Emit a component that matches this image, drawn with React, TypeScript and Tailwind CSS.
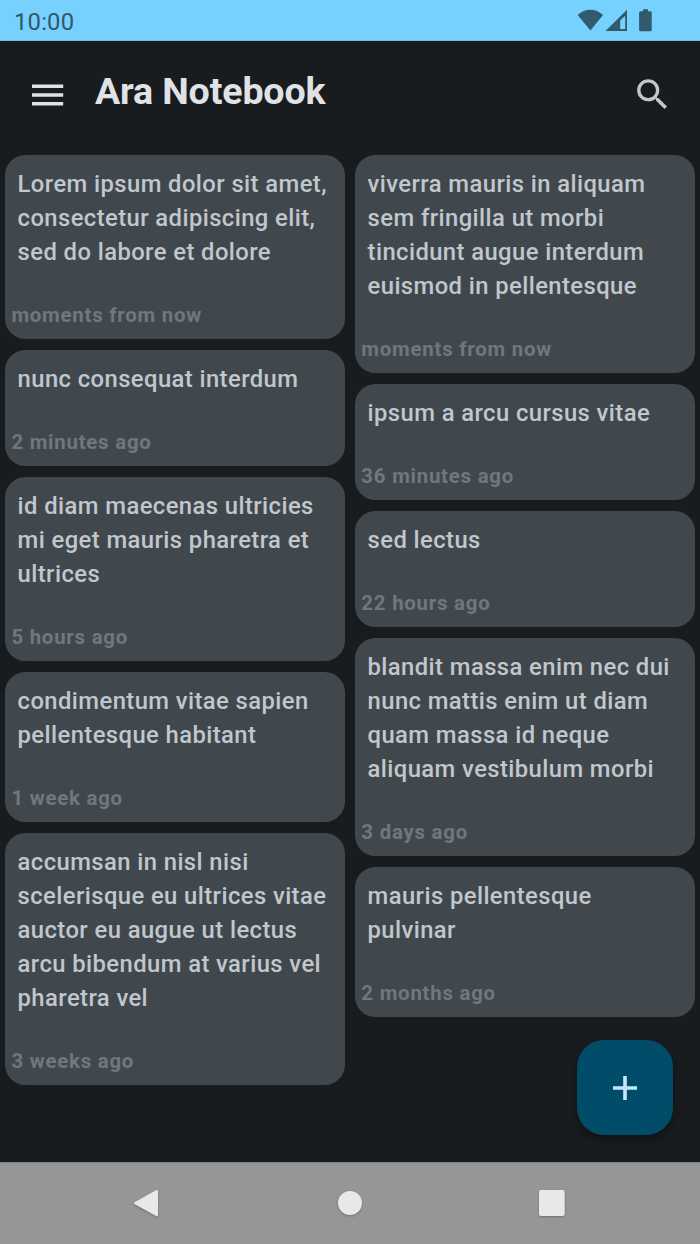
type Note = { text: string[]; time: string };

const left: Note[] = [
  { text: ["Lorem ipsum dolor sit amet,", "consectetur adipiscing elit,", "sed do labore et dolore"], time: "moments from now" },
  { text: ["nunc consequat interdum"], time: "2 minutes ago" },
  { text: ["id diam maecenas ultricies", "mi eget mauris pharetra et", "ultrices"], time: "5 hours ago" },
  { text: ["condimentum vitae sapien", "pellentesque habitant"], time: "1 week ago" },
  {
    text: ["accumsan in nisl nisi", "scelerisque eu ultrices vitae", "auctor eu augue ut lectus", "arcu bibendum at varius vel", "pharetra vel"],
    time: "3 weeks ago",
  },
];

const right: Note[] = [
  { text: ["viverra mauris in aliquam", "sem fringilla ut morbi", "tincidunt augue interdum", "euismod in pellentesque"], time: "moments from now" },
  { text: ["ipsum a arcu cursus vitae"], time: "36 minutes ago" },
  { text: ["sed lectus"], time: "22 hours ago" },
  { text: ["blandit massa enim nec dui", "nunc mattis enim ut diam", "quam massa id neque", "aliquam vestibulum morbi"], time: "3 days ago" },
  { text: ["mauris pellentesque", "pulvinar"], time: "2 months ago" },
];

function NoteCard({ note }: { note: Note }) {
  return (
    <article className="rounded-[20.4px] bg-[#41484d] pt-[12.3px] pb-[9.7px]">
      <div className="pl-[12.4px] text-[23.8px] leading-[34px] font-medium tracking-[0.42px] whitespace-nowrap text-[#c0c7cd]">
        {note.text.map((line) => (
          <p key={line}>{line}</p>
        ))}
      </div>
      <p className="mt-[33px] pl-[6.2px] text-[20.4px] leading-[27px] font-bold tracking-[0.77px] whitespace-nowrap text-[#70777d]">{note.time}</p>
    </article>
  );
}

function Column({ notes }: { notes: Note[] }) {
  return (
    <div className="flex w-[339.6px] flex-col gap-[10.9px]">
      {notes.map((note) => (
        <NoteCard key={note.text[0]} note={note} />
      ))}
    </div>
  );
}

export default function App() {
  return (
    <div className="relative flex h-[1244px] w-[700px] flex-col overflow-hidden bg-[#191c1e] font-['Roboto',sans-serif]">
      <header className="flex h-[41px] shrink-0 items-center justify-between border-b border-[#6cbfe9] bg-[#76d1ff] pr-[47px] pl-[14px]">
        <span className="pt-[3px] text-[23.8px] leading-7 tracking-[0.2px] text-[#33586b]">10:00</span>
        <svg width="76" height="40" viewBox="0 0 76 40" fill="#315a6d">
          <path d="M0.7 14.9C8 8 18.5 8 26 14.9L13.4 30.4Z" />
          <path fillRule="evenodd" d="M50 9.8V31H28.5ZM48.2 15.8L43.2 20.5V28.9H48.2Z" />
          <path d="M66 9.3h5v2h2.2a1.5 1.5 0 0 1 1.5 1.5v17a1.5 1.5 0 0 1-1.5 1.5h-9.6a1.5 1.5 0 0 1-1.5-1.5v-17a1.5 1.5 0 0 1 1.5-1.5H66z" />
        </svg>
      </header>

      <div className="flex h-[114.2px] shrink-0 items-center pr-[27px] pl-[32px]">
        <svg width="32" height="22" viewBox="0 0 32 22" fill="#e1e2e5" className="mt-[-6px]">
          <path d="M0 .5h31.2v3.6H0zM0 9.2h31.2v3.6H0zM0 17.9h31.2v3.6H0z" />
        </svg>
        <h1 className="mt-[-15px] ml-[31px] grow text-[37.6px] leading-[48px] font-bold tracking-[-0.15px] text-[#e1e2e5]">Ara Notebook</h1>
        <svg width="41" height="41" viewBox="0 0 24 24" fill="#c0c7cd" className="mt-[-7px]">
          <path d="M15.5 14h-.79l-.28-.27A6.47 6.47 0 0 0 16 9.5 6.5 6.5 0 1 0 9.5 16c1.61 0 3.09-.59 4.23-1.57l.27.28v.79l5 4.99L20.49 19l-4.99-5zm-6 0C7.01 14 5 11.99 5 9.5S7.01 5 9.5 5 14 7.01 14 9.5 11.99 14 9.5 14z" />
        </svg>
      </div>

      <main className="flex grow items-start gap-[10.4px] pl-[5.2px]">
        <Column notes={left} />
        <Column notes={right} />
      </main>

      <button
        aria-label="Add note"
        className="absolute top-[1040px] left-[577.3px] flex h-[95px] w-[95.5px] items-center justify-center rounded-[27px] bg-[#004c69] shadow-[0_5px_10px_rgba(0,0,0,0.35)]"
      >
        <svg width="24" height="24" viewBox="0 0 24 24" fill="#c4e7ff">
          <path d="M10.2 0h3.6v10.2H24v3.6H13.8V24h-3.6V13.8H0v-3.6h10.2z" />
        </svg>
      </button>

      <nav className="flex h-[82px] shrink-0 items-center border-t border-[#828282] bg-[#969696]">
        <svg width="700" height="81" viewBox="0 1163 700 81" fill="#e8e8e8" className="drop-shadow-[0_1px_1px_rgba(0,0,0,0.25)]">
          <path d="M156 1190.2L135 1201.9Q133.2 1203 135 1204.2L156 1216Q158 1217 158 1215V1191.3Q158 1189.2 156 1190.2Z" />
          <circle cx="350" cy="1203" r="12" />
          <rect x="539" y="1190" width="25.7" height="26" rx="2" />
        </svg>
      </nav>
    </div>
  );
}
